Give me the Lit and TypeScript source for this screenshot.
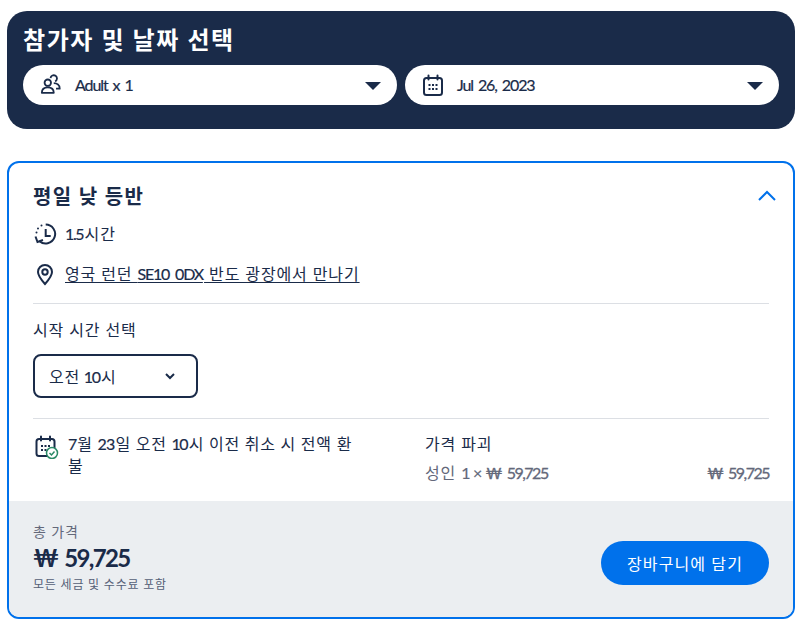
import { LitElement, css, html, svg } from "lit";
import { customElement } from "lit/decorators.js";

const calendarIcon = svg`<g fill="none" stroke="currentColor" stroke-width="2" stroke-linecap="round">
  <rect x="2" y="4" width="18" height="17" rx="2.5" />
  <path d="M6.5 1.5v4M15.5 1.5v4" />
</g>
<g fill="currentColor">
  <rect x="6.5" y="10" width="2" height="2" /><rect x="10" y="10" width="2" height="2" /><rect x="13.5" y="10" width="2" height="2" />
  <rect x="6.5" y="14" width="2" height="2" /><rect x="10" y="14" width="2" height="2" /><rect x="13.5" y="14" width="2" height="2" />
</g>`;

@customElement("app-root")
export class AppRoot extends LitElement {
  static styles = css`
    :host {
      display: block;
      padding: 11px 10px 0 7px;
      font-family: Lato, "Noto Sans CJK KR", sans-serif;
      color: #1a2b49;
      letter-spacing: 0.9px;
    }
    /* latin runs are tighter than the korean around them */
    .l {
      letter-spacing: -0.8px;
      padding-right: 0.8px;
      -webkit-text-stroke: 0.2px currentColor;
    }
    .n {
      letter-spacing: -1.4px;
      padding-right: 1.4px;
      -webkit-text-stroke: 0.2px currentColor;
    }
    .pc {
      letter-spacing: -1.2px;
      padding-right: 1.2px;
      word-spacing: 3px;
      -webkit-text-stroke: 0.2px currentColor;
    }
    .selector {
      background: #1a2b49;
      border-radius: 20px;
      padding: 12px 16px 24px;
      height: 118px;
      box-sizing: border-box;
    }
    h1 {
      margin: 0 0 8px;
      font-size: 24px;
      line-height: 34px;
      font-weight: 700;
      color: #fff;
      letter-spacing: 1.6px;
    }
    .pills {
      display: flex;
      gap: 8px;
    }
    .pill {
      flex: 1;
      height: 40px;
      background: #fff;
      border-radius: 20px;
      display: flex;
      align-items: center;
      padding: 0 16px 0 17px;
      font-size: 16px;
    }
    .pill svg {
      width: 22px;
      height: 22px;
      margin-right: 13px;
    }
    .pill span {
      margin-bottom: 2px;
      letter-spacing: -1.1px;
      word-spacing: 2px;
      -webkit-text-stroke: 0.2px currentColor;
    }
    .caret {
      margin-left: auto;
      width: 0;
      height: 0;
      border-left: 8px solid transparent;
      border-right: 8px solid transparent;
      border-top: 8px solid #1a2b49;
      margin-top: 1px;
    }
    .card {
      margin-top: 32px;
      border: 2px solid #0071eb;
      border-radius: 12px;
      overflow: hidden;
      height: 458px;
      box-sizing: border-box;
      display: flex;
      flex-direction: column;
    }
    .body {
      flex: 1;
      padding: 14px 24px 0;
    }
    .title-row {
      display: flex;
      justify-content: space-between;
      align-items: center;
    }
    .title-row svg {
      margin-right: -8px;
    }
    h2 {
      margin: 0;
      font-size: 20px;
      line-height: 38px;
      font-weight: 700;
      letter-spacing: 1.35px;
    }
    .meta {
      display: flex;
      align-items: center;
      font-size: 16px;
      line-height: 24px;
      margin-top: 7px;
    }
    .meta.loc {
      margin-top: 16px;
    }
    .meta svg {
      flex: none;
      width: 24px;
      height: 24px;
      margin-right: 8px;
    }
    .meta a {
      color: inherit;
      text-decoration: underline;
      text-underline-offset: 2px;
    }
    hr {
      border: 0;
      border-top: 1px solid #dcdfe4;
      margin: 17px 0 15px;
    }
    hr.after-time {
      margin: 20px 0 16px;
    }
    .label {
      font-size: 16px;
      line-height: 22px;
    }
    .time {
      margin-top: 13px;
      width: 165px;
      height: 44px;
      box-sizing: border-box;
      border: 2px solid #1a2b49;
      border-radius: 8px;
      display: flex;
      align-items: center;
      justify-content: space-between;
      padding: 0 20px 0 14px;
      font-size: 16px;
      word-spacing: -1.5px;
    }
    .time svg {
      width: 12px;
      height: 12px;
    }
    .details {
      display: flex;
      font-size: 16px;
      line-height: 24px;
      margin-top: -3px;
    }
    .cancel {
      display: flex;
      width: 392px;
    }
    .cancel svg {
      flex: none;
      width: 27px;
      height: 27px;
      margin-right: 8px;
    }
    .cancel p {
      margin: 1px 0 0;
      line-height: 22px;
      letter-spacing: 0.75px;
    }
    .price {
      flex: 1;
    }
    .price-row {
      display: flex;
      justify-content: space-between;
      margin-top: 5px;
      color: #63687a;
    }
    .amount {
      letter-spacing: -1.5px;
      word-spacing: 3px;
      -webkit-text-stroke: 0.3px currentColor;
    }
    .footer {
      background: #ebeef1;
      height: 116px;
      box-sizing: border-box;
      padding: 21px 24px 0;
      display: flex;
      justify-content: space-between;
    }
    .total-label {
      font-size: 14px;
      line-height: 20px;
      color: #63687a;
    }
    .total {
      font-size: 24px;
      line-height: 30px;
      font-weight: 700;
      margin-top: 1px;
      letter-spacing: -1.7px;
      word-spacing: 3px;
    }
    .tax {
      font-size: 12px;
      line-height: 18px;
      color: #545f76;
      margin-top: 3px;
      letter-spacing: 0.8px;
    }
    button {
      margin-top: 19px;
      width: 168px;
      height: 44px;
      border: 0;
      border-radius: 22px;
      background: #0071eb;
      color: #fff;
      font: inherit;
      font-size: 16px;
      letter-spacing: 1.1px;
    }
  `;

  render() {
    return html`
      <section class="selector">
        <h1>참가자 및 날짜 선택</h1>
        <div class="pills">
          <div class="pill">
            <svg viewBox="0 0 24 24" fill="none" stroke="currentColor" stroke-width="2" stroke-linejoin="round">
              <path d="M11.5 4.5a3.5 3.5 0 1 1 5 3.5" />
              <circle cx="8.5" cy="9.5" r="3.5" />
              <path d="M2 20.5c0-4 2.5-6 6.5-6s6.5 2 6.5 6z" />
              <path d="M15 10c3.5 0 6.5 2 6.5 6h-4" />
            </svg>
            <span>Adult x 1</span>
            <i class="caret"></i>
          </div>
          <div class="pill">
            <svg viewBox="0 0 22 22">${calendarIcon}</svg>
            <span>Jul 26, 2023</span>
            <i class="caret"></i>
          </div>
        </div>
      </section>

      <section class="card">
        <div class="body">
          <div class="title-row">
            <h2>평일 낮 등반</h2>
            <svg width="20" height="20" viewBox="0 0 20 20" fill="none" stroke="#0071eb" stroke-width="2">
              <path d="M2 14l8-8 8 8" />
            </svg>
          </div>
          <div class="meta">
            <svg viewBox="0 0 24 24" fill="none" stroke="currentColor" stroke-width="2">
              <path d="M12.7 2.5a9.5 9.5 0 1 1 -6.5 16.5" />
              <path d="M12.7 7v7h5" />
              <path d="M2.5 14.5l2 5.5 5.5-2" />
              <path d="M3.5 10.5v.1M5 6.5v.1M8.5 3.5v.1" stroke-linecap="round" />
            </svg>
            <span><span class="n">1.5</span>시간</span>
          </div>
          <div class="meta loc">
            <svg viewBox="0 0 24 24" fill="none" stroke="currentColor" stroke-width="2">
              <path d="M12 22c-4-4.5-7-8-7-12a7 7 0 0 1 14 0c0 4-3 7.5-7 12z" />
              <circle cx="12" cy="10" r="2.7" />
            </svg>
            <a href="#">영국 런던 <span class="pc">SE10 0DX</span> 반도 광장에서 만나기</a>
          </div>
          <hr />
          <div class="label">시작 시간 선택</div>
          <div class="time">
            <span>오전 <span class="n">10</span>시</span>
            <svg viewBox="0 0 12 12" fill="none" stroke="currentColor" stroke-width="2">
              <path d="M2 4l4 4 4-4" />
            </svg>
          </div>
          <hr class="after-time" />
          <div class="details">
            <div class="cancel">
              <svg viewBox="0 0 27 27">
                <g transform="translate(1.5 3)">${calendarIcon}</g>
                <circle cx="19" cy="21" r="5.5" fill="#fff" stroke="#2a8a66" stroke-width="1.5" />
                <path d="M16.5 21l2 2 3-3.5" fill="none" stroke="#2a8a66" stroke-width="1.5" />
              </svg>
              <p><span class="l">7</span>월 <span class="l">23</span>일 오전 <span class="n">10</span>시 이전 취소 시 전액 환<br />불</p>
            </div>
            <div class="price">
              <div>가격 파괴</div>
              <div class="price-row">
                <span>성인 <span class="l">1 × </span><span class="amount">₩ 59,725</span></span>
                <span class="amount">₩ 59,725</span>
              </div>
            </div>
          </div>
        </div>
        <div class="footer">
          <div>
            <div class="total-label">총 가격</div>
            <div class="total">₩ 59,725</div>
            <div class="tax">모든 세금 및 수수료 포함</div>
          </div>
          <button>장바구니에 담기</button>
        </div>
      </section>
    `;
  }
}
